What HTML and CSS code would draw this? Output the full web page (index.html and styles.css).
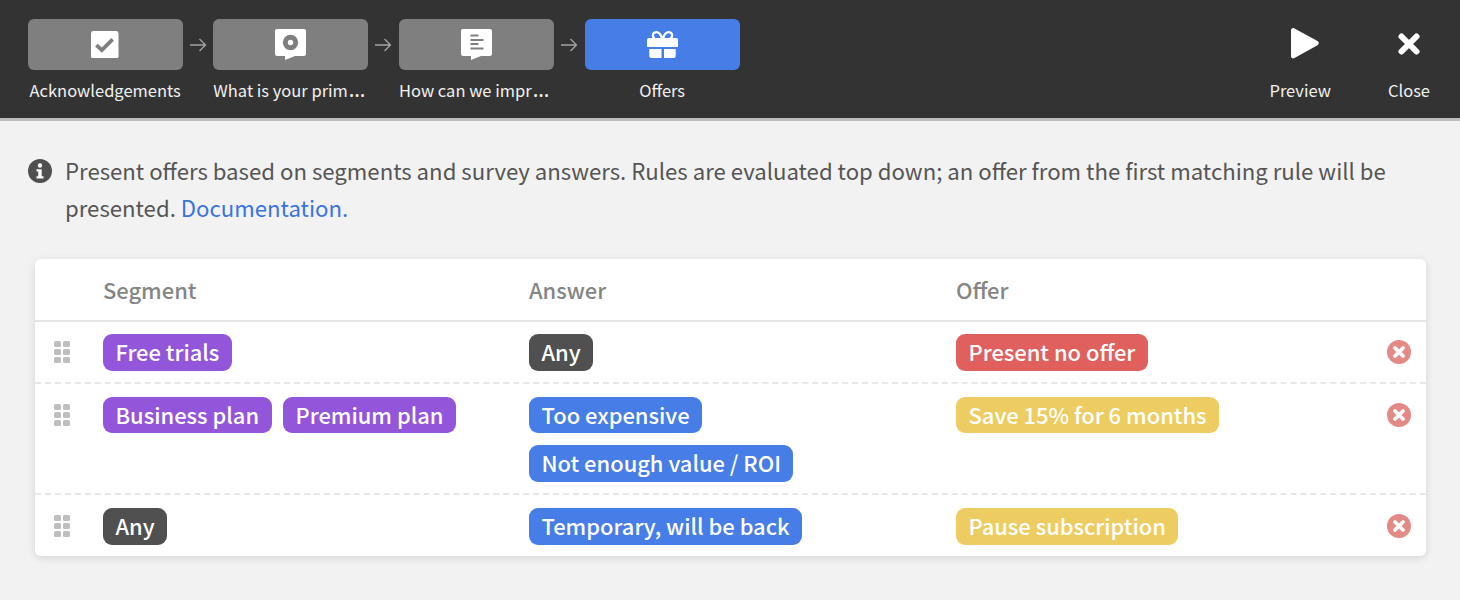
FILE: index.html
```html
<!DOCTYPE html>
<html lang="en">
<head>
<meta charset="utf-8">
<title>Offers</title>
<link rel="stylesheet" href="styles.css">
</head>
<body>
<svg class="defs" width="0" height="0" aria-hidden="true">
  <defs>
    <symbol id="arrow" viewBox="0 0 18 14"><path d="M1 7h15.500M10.500 1l6 6-6 6" fill="none" stroke="#a3a3a3" stroke-width="1.300"/></symbol>
    <symbol id="grip" viewBox="0 0 16 22"><g fill="#bfbfbf"><rect x="0" y="0" width="7" height="6" rx="1.500"/><rect x="9" y="0" width="7" height="6" rx="1.500"/><rect x="0" y="8" width="7" height="6" rx="1.500"/><rect x="9" y="8" width="7" height="6" rx="1.500"/><rect x="0" y="16" width="7" height="6" rx="1.500"/><rect x="9" y="16" width="7" height="6" rx="1.500"/></g></symbol>
    <symbol id="remove" viewBox="0 0 24 24"><circle cx="12" cy="12" r="12" fill="#e38a87"/><path d="M8 8l8 8M16 8l-8 8" stroke="#fff" stroke-width="3.800" stroke-linecap="round"/></symbol>
  </defs>
</svg>
<header class="topbar">
  <nav class="steps">
    <div class="step">
      <div class="step-box">
        <svg class="step-icon" width="27.500" height="27.500" viewBox="0 0 28 28"><rect width="28" height="28" rx="2.500" fill="#fff"/><path d="M5.500 14.500l5.500 5 11-11" fill="none" stroke="#7f7f7f" stroke-width="3.800"/></svg>
      </div>
      <div class="step-label">Acknowledgements</div>
    </div>
    <svg class="step-arrow" width="18" height="14"><use href="#arrow"/></svg>
    <div class="step">
      <div class="step-box">
        <svg class="step-icon" width="31" height="31" viewBox="0 0 31 31"><path d="M2 0h27a2 2 0 0 1 2 2v23a2 2 0 0 1-2 2H20l-10 4v-4H2a2 2 0 0 1-2-2V2a2 2 0 0 1 2-2z" fill="#fff"/><circle cx="15.500" cy="13.500" r="5.200" fill="none" stroke="#7f7f7f" stroke-width="5"/></svg>
      </div>
      <div class="step-label">What is your prim<span class="ell">…</span></div>
    </div>
    <svg class="step-arrow" width="18" height="14"><use href="#arrow"/></svg>
    <div class="step">
      <div class="step-box">
        <svg class="step-icon" width="31" height="31" viewBox="0 0 31 31"><path d="M2 0h27a2 2 0 0 1 2 2v23a2 2 0 0 1-2 2H20l-10 4v-4H2a2 2 0 0 1-2-2V2a2 2 0 0 1 2-2z" fill="#fff"/><path d="M9.500 6.500h8M9.500 11h13M9.500 15h8M9.500 19.500h13" stroke="#7f7f7f" stroke-width="2" fill="none"/></svg>
      </div>
      <div class="step-label">How can we impr<span class="ell">…</span></div>
    </div>
    <svg class="step-arrow" width="18" height="14"><use href="#arrow"/></svg>
    <div class="step step-active">
      <div class="step-box">
        <svg class="step-icon" width="31" height="27" viewBox="0 0 31 27"><path d="M15 7.500C13.500 2.500 10.500.9 8.200 1.300 5.500 1.800 5 5.500 7.500 7.500M16 7.500C17.500 2.500 20.500.9 22.800 1.300 25.500 1.800 26 5.500 23.500 7.500" fill="none" stroke="#fff" stroke-width="2.300"/><path d="M2 7h27a2 2 0 0 1 2 2v7H0V9a2 2 0 0 1 2-2zM2.300 18h12.200v9H4.300a2 2 0 0 1-2-2zM17 18h11.700v7a2 2 0 0 1-2 2H17z" fill="#fff"/></svg>
      </div>
      <div class="step-label step-label-center">Offers</div>
    </div>
  </nav>
  <div class="actions">
    <div class="action action-preview">
      <svg width="28" height="31" viewBox="0 0 28 32" preserveAspectRatio="none"><path d="M0 2.500C0 .5 1.800-.5 3.500.5l23 13c1.700 1 1.700 3.200 0 4.200l-23 13.300C1.800 32 0 31 0 29z" fill="#fff"/></svg>
      <div class="action-label">Preview</div>
    </div>
    <div class="action action-close">
      <svg width="24" height="24" viewBox="0 0 24 24"><path d="M4.500 4.500l15 15M19.500 4.500l-15 15" stroke="#fff" stroke-width="6" stroke-linecap="round"/></svg>
      <div class="action-label">Close</div>
    </div>
  </div>
</header>
<main class="content">
  <div class="notice">
    <svg class="notice-icon" width="24" height="24" viewBox="0 0 24 24"><circle cx="12" cy="12" r="12" fill="#505050"/><circle cx="12" cy="6.500" r="2.200" fill="#fff"/><path d="M8.500 10.200h5.200v7h1.800v2.300h-7v-2.300h1.700v-4.700H8.500z" fill="#fff"/></svg>
    <p class="notice-text">Present offers based on segments and survey answers. Rules are evaluated top down; an offer from the first matching rule will be presented. <a class="link" href="#">Documentation.</a></p>
  </div>
  <section class="table">
    <div class="row row-head">
      <div class="cell-grip"></div>
      <div class="col-title">Segment</div>
      <div class="col-title">Answer</div>
      <div class="col-title">Offer</div>
    </div>
    <div class="row">
      <svg class="grip" width="16" height="22"><use href="#grip"/></svg>
      <div class="tags"><span class="tag purple">Free trials</span></div>
      <div class="tags"><span class="tag dark">Any</span></div>
      <div class="tags"><span class="tag red">Present no offer</span></div>
      <svg class="remove" width="24" height="24"><use href="#remove"/></svg>
    </div>
    <div class="row">
      <svg class="grip" width="16" height="22"><use href="#grip"/></svg>
      <div class="tags"><span class="tag purple">Business plan</span><span class="tag purple">Premium plan</span></div>
      <div class="tags"><span class="tag blue">Too expensive</span><span class="tag blue">Not enough value / ROI</span></div>
      <div class="tags"><span class="tag yellow">Save 15% for 6 months</span></div>
      <svg class="remove" width="24" height="24"><use href="#remove"/></svg>
    </div>
    <div class="row">
      <svg class="grip" width="16" height="22"><use href="#grip"/></svg>
      <div class="tags"><span class="tag dark">Any</span></div>
      <div class="tags"><span class="tag blue">Temporary, will be back</span></div>
      <div class="tags"><span class="tag yellow">Pause subscription</span></div>
      <svg class="remove" width="24" height="24"><use href="#remove"/></svg>
    </div>
  </section>
</main>
</body>
</html>
```
FILE: styles.css
```css
* { box-sizing: border-box; }
html, body { margin: 0; height: 600px; overflow: hidden; }
body {
  background: #f2f2f2;
  font-family: "Noto Sans CJK JP", "Noto Sans", sans-serif;
  color: #555;
}
.defs { position: absolute; }
.topbar {
  height: 121px;
  background: #333;
  border-bottom: 3px solid #bcbcbc;
  padding: 19px 30px 0 27.700px;
  display: flex;
  justify-content: space-between;
}
.steps { display: flex; align-items: flex-start; }
.step { width: 155px; }
.step-box {
  height: 51px;
  background: #7f7f7f;
  border-radius: 6px;
  display: flex;
  align-items: center;
  justify-content: center;
}
.step-active .step-box { background: #467de6; }
.step-arrow { margin: 19px 6.670px 0 6px; flex: none; }
.step-label {
  margin-top: 8px;
  font-size: 16.500px;
  line-height: 24px;
  color: #f1f1f1;
  text-align: left;
  white-space: nowrap;
}
.step:first-child .step-label, .step-label-center { text-align: center; }
.ell { font-family: "Noto Sans", sans-serif; font-size: 21px; line-height: 0; margin-left: 1px; }
.actions { display: flex; gap: 57px; }
.action { display: flex; flex-direction: column; align-items: center; }
.action svg { display: block; margin-top: 9px; }
.action-preview svg { margin-left: 9px; }
.action-close svg { margin-top: 13px; }
.action-label {
  margin-top: 19px;
  font-size: 16.500px;
  line-height: 24px;
  color: #f1f1f1;
}
.action-close .action-label { margin-top: 22px; }
.content { padding: 31px 34px 0 28px; }
.notice { display: flex; gap: 13px; align-items: flex-start; }
.notice-icon { flex: none; margin-top: 6.500px; }
.notice-text {
  margin: 0;
  font-size: 22.180px;
  line-height: 37px;
  color: #555;
}
.link { color: #3a74e0; text-decoration: none; }
.table {
  margin: 33px 0 0 7px;
  background: #fff;
  border-radius: 6px;
  box-shadow: 0 2px 8px rgba(0, 0, 0, .12);
}
.row {
  display: grid;
  grid-template-columns: 68px 426px 427px 1fr 39.500px;
  border-top: 2px dashed #e8e8e8;
  padding: 12.500px 0 11.500px;
}
.row:last-child { padding-bottom: 11.670px; }
.row-head {
  border-top: none;
  border-bottom: 2px solid #e5e5e5;
  padding: 0;
  height: 63px;
  align-items: center;
  grid-template-columns: 68px 426px 427px 1fr;
}
.row-head + .row { border-top: none; padding-top: 12px; }
.col-title {
  font-size: 21.900px;
  font-weight: 500;
  color: #858585;
  line-height: 30px;
}
.grip { margin: 7px 0 0 19.300px; }
.tags { display: flex; flex-wrap: wrap; gap: 12px 11.500px; align-items: flex-start; }
.tag {
  display: inline-block;
  height: 36.670px;
  line-height: 35px;
  padding: 0 12.500px;
  border-radius: 9px;
  font-size: 21.900px;
  font-weight: 500;
  color: #fff;
  white-space: nowrap;
}
.purple { background: #9356da; }
.dark { background: #505050; }
.red { background: #e0605e; }
.blue { background: #467de6; }
.yellow { background: #edcd62; }
.remove { margin: 6px 0 0 0; }
```
